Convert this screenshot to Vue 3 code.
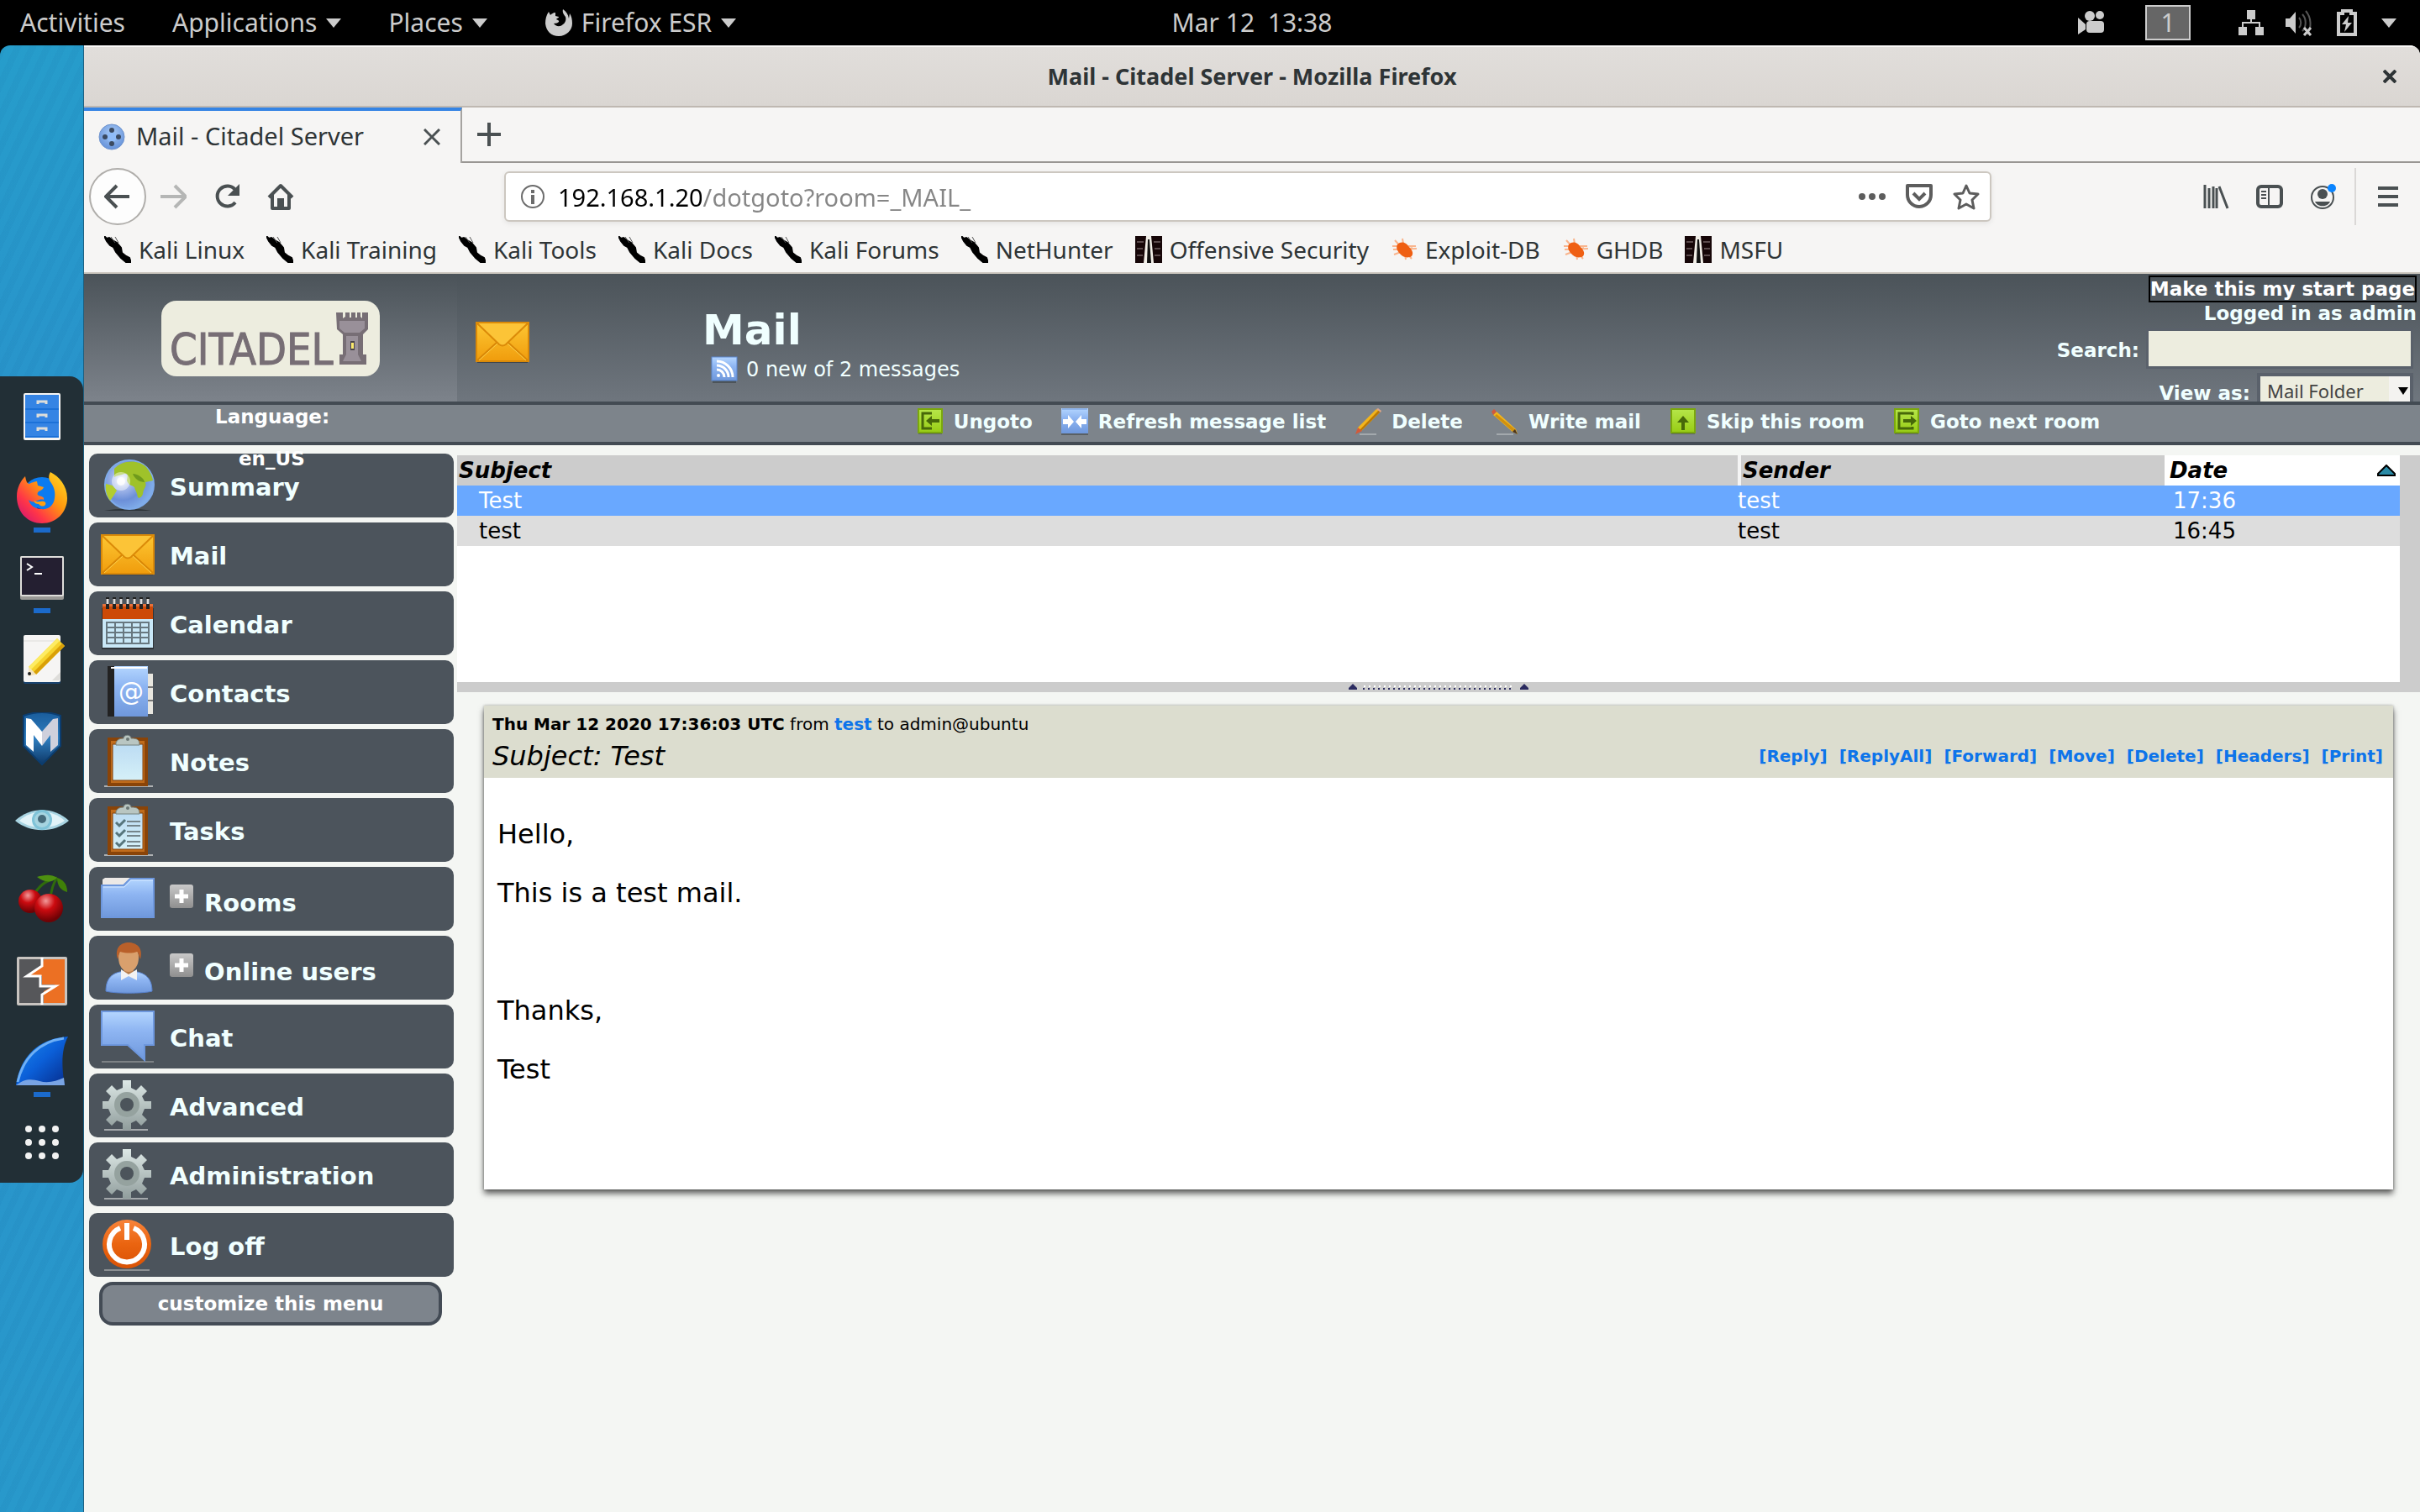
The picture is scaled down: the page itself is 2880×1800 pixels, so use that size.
<script setup>
import { ref } from 'vue'

const address = ref('192.168.1.20/dotgoto?room=_MAIL_')
const search = ref('')
const view = ref('Mail Folder')

const launchers = [
  { icon: 'files', name: 'Files' },
  { icon: 'firefox', name: 'Firefox', running: true },
  { icon: 'terminal', name: 'Terminal', running: true },
  { icon: 'notepad', name: 'Text editor' },
  { icon: 'metasploit', name: 'Metasploit' },
  { icon: 'eye', name: 'Zenmap' },
  { icon: 'cherry', name: 'CherryTree' },
  { icon: 'burp', name: 'Burp Suite' },
  { icon: 'shark', name: 'Wireshark', running: true },
  { icon: 'apps', name: 'Show applications' },
]

const bookmarks = [
  { icon: 'kali', label: 'Kali Linux' },
  { icon: 'kali', label: 'Kali Training' },
  { icon: 'kali', label: 'Kali Tools' },
  { icon: 'kali', label: 'Kali Docs' },
  { icon: 'kali', label: 'Kali Forums' },
  { icon: 'kali', label: 'NetHunter' },
  { icon: 'offsec', label: 'Offensive Security' },
  { icon: 'bug', label: 'Exploit-DB' },
  { icon: 'bug', label: 'GHDB' },
  { icon: 'offsec', label: 'MSFU' },
]

const tools = [
  { icon: 'ungoto', label: 'Ungoto' },
  { icon: 'refresh', label: 'Refresh message list' },
  { icon: 'pencil-up', label: 'Delete' },
  { icon: 'pencil-down', label: 'Write mail' },
  { icon: 'skip', label: 'Skip this room' },
  { icon: 'goto', label: 'Goto next room' },
]

const menu = [
  { icon: 'globe', label: 'Summary' },
  { icon: 'envelope', label: 'Mail' },
  { icon: 'calendar', label: 'Calendar' },
  { icon: 'contacts', label: 'Contacts', mark: '@' },
  { icon: 'notes', label: 'Notes' },
  { icon: 'tasks', label: 'Tasks' },
  { icon: 'folder', label: 'Rooms', expandable: true },
  { icon: 'user', label: 'Online users', expandable: true },
  { icon: 'chat', label: 'Chat' },
  { icon: 'gear', label: 'Advanced' },
  { icon: 'gear', label: 'Administration' },
  { icon: 'power', label: 'Log off', last: true },
]

const messages = [
  { subject: 'Test', sender: 'test', date: '17:36', selected: true },
  { subject: 'test', sender: 'test', date: '16:45' },
]

const actions = ['Reply', 'ReplyAll', 'Forward', 'Move', 'Delete', 'Headers', 'Print']
</script>

<template>
  <div class="screen">
    <svg class="sprite" aria-hidden="true">
      <defs>
        <linearGradient id="gGold" x1="0" y1="0" x2="0" y2="1"><stop offset="0" stop-color="#fdc733" /><stop offset="1" stop-color="#f09c0c" /></linearGradient>
        <linearGradient id="gBlue" x1="0" y1="0" x2="0" y2="1"><stop offset="0" stop-color="#b4d6ff" /><stop offset=".4" stop-color="#8eb5f2" /><stop offset="1" stop-color="#6f98dc" /></linearGradient>
        <linearGradient id="gGreen" x1="0" y1="0" x2="0" y2="1"><stop offset="0" stop-color="#b6e64a" /><stop offset="1" stop-color="#97cc14" /></linearGradient>
        <linearGradient id="gSteel" x1="0" y1="0" x2="0" y2="1"><stop offset="0" stop-color="#dde8e6" /><stop offset="1" stop-color="#909d9c" /></linearGradient>
        <linearGradient id="gSky" x1="0" y1="0" x2="0" y2="1"><stop offset="0" stop-color="#bcdcf3" /><stop offset="1" stop-color="#d5f0f8" /></linearGradient>
        <linearGradient id="gFin" x1="0" y1="0" x2="1" y2="1"><stop offset="0" stop-color="#1b8cf0" /><stop offset=".5" stop-color="#0b5fd8" /><stop offset="1" stop-color="#062a88" /></linearGradient>
        <linearGradient id="gFox" x1="1" y1="0" x2="0" y2="1"><stop offset="0" stop-color="#ffe226" /><stop offset=".4" stop-color="#ff980e" /><stop offset=".7" stop-color="#ff3647" /><stop offset="1" stop-color="#c80a80" /></linearGradient>
        <linearGradient id="gMsf" x1="0" y1="0" x2="0" y2="1"><stop offset="0" stop-color="#1a5d9c" /><stop offset=".5" stop-color="#2f7ec0" /><stop offset="1" stop-color="#0d3766" /></linearGradient>
        <linearGradient id="gPlus" x1="0" y1="0" x2="0" y2="1"><stop offset="0" stop-color="#c9c9c9" /><stop offset="1" stop-color="#8f8f8f" /></linearGradient>
        <linearGradient id="gPower" x1="0" y1="0" x2="0" y2="1"><stop offset="0" stop-color="#f8843a" /><stop offset=".5" stop-color="#ea6410" /><stop offset="1" stop-color="#d95205" /></linearGradient>
        <radialGradient id="gGlobe" cx=".35" cy=".4" r=".7"><stop offset="0" stop-color="#fff" /><stop offset=".25" stop-color="#a9bcec" /><stop offset=".6" stop-color="#6c8fd8" /><stop offset="1" stop-color="#85b4ee" /></radialGradient>
        <radialGradient id="gCherry" cx=".4" cy=".25" r=".7"><stop offset="0" stop-color="#f29a9a" /><stop offset=".45" stop-color="#cc0b10" /><stop offset="1" stop-color="#6f0205" /></radialGradient>
        <radialGradient id="gFav" cx=".5" cy=".35" r=".6"><stop offset="0" stop-color="#a9cbf5" /><stop offset="1" stop-color="#6a96dc" /></radialGradient>
      </defs>

      <symbol id="files" viewBox="0 0 64 64">
        <rect x="10" y="4" width="44" height="56" rx="2" fill="#f6f5f4" />
        <rect x="12" y="6" width="40" height="51" fill="#3584e4" />
        <path d="M12 23h40M12 39h40M12 56h40" stroke="#1c71d8" stroke-width="2" />
        <path d="M27 17v-3h10v3M27 33v-3h10v3M27 49v-3h10v3" fill="none" stroke="#deddda" stroke-width="3" />
      </symbol>
      <symbol id="firefox" viewBox="0 0 64 64">
        <circle cx="32" cy="32" r="24" fill="#0b7bf0" />
        <path d="M26 44c10 6 22 2 22-10 0 14-8 22-18 20z" fill="#2a1a90" />
        <path d="M42 2c-3 5-2 9 1 13 4 6 5 12 4 18-1 9-8 14-16 13-7 0-13-4-15-11 3 3 7 3 10 1 3-1 5-2 8-1 1-3-2-4-6-5-2-1-2-3 0-5 2-1 5-2 6-5-2-1-5-1-7-2l-1-5c-4 1-6 1-9 3-3 0-4-4-5-9-5 5-10 13-10 24 0 19 13 32 30 32s30-13 30-30C62 18 52 7 42 2z" fill="url(#gFox)" />
        <path d="M28 40c4 5 10 2 8-2-4-3-6 1-14-2 1 3 3 4 6 4z" fill="#ff9f10" />
      </symbol>
      <symbol id="terminal" viewBox="0 0 64 64">
        <rect x="6" y="6" width="52" height="52" rx="2" fill="#9a9996" />
        <rect x="6" y="6" width="52" height="48" rx="2" fill="#deddda" />
        <rect x="8" y="8" width="48" height="44" fill="#241f31" />
        <path d="M14 15l6 4-6 4M23 27h9" fill="none" stroke="#fff" stroke-width="2" />
      </symbol>
      <symbol id="notepad" viewBox="0 0 64 64">
        <rect x="10" y="6" width="44" height="56" rx="2" fill="#1a4470" />
        <rect x="10" y="4" width="44" height="56" rx="2" fill="#f6f5f4" />
        <path d="M10 11h44" stroke="#deddda" stroke-width="1" />
        <path d="M44 58l10-10v8a2 2 0 01-2 2z" fill="#deddda" />
        <path d="M16 42l34-34 9 9-34 34z" fill="#f6d32d" />
        <path d="M22 48l34-34 3 3-34 34z" fill="#d9a008" />
        <path d="M16 42l34-34 3 3-34 34z" fill="#fdec62" />
        <path d="M16 42l9 9-9 2z" fill="#f3e3c0" /><circle cx="17" cy="50" r="2" fill="#222" />
      </symbol>
      <symbol id="metasploit" viewBox="0 0 64 64">
        <path d="M10 4c14-5 30-5 44 0v36L32 62 10 40z" fill="url(#gMsf)" stroke="#0b3d70" stroke-width="2" />
        <path d="M13 7l6 1 13 15v17L22 27v20l-9-8z" fill="#fff" />
        <path d="M51 7l-6 1-13 15v17l10-13v20l9-8z" fill="#cfd0dc" />
      </symbol>
      <symbol id="eye" viewBox="0 0 64 64">
        <path d="M0 33C18 16 46 16 64 33 46 48 18 48 0 33z" fill="#a8d4e2" />
        <path d="M5 33C20 19 44 19 59 33 44 44 20 44 5 33z" fill="#e2f3f8" />
        <circle cx="32" cy="32" r="12" fill="#7fc3d8" /><circle cx="32" cy="32" r="9" fill="#a6d4e0" /><circle cx="32" cy="31" r="5" fill="#466a7a" />
      </symbol>
      <symbol id="cherry" viewBox="0 0 64 64">
        <path d="M23 24C32 10 40 8 50 5M42 30c1-12 3-18 8-25" fill="none" stroke="#2f6b0c" stroke-width="3" />
        <path d="M50 5C42 0 34 2 26 4c8 6 16 8 24 1z" fill="#4d9010" />
        <path d="M50 5c6 2 12 6 12 17-8-2-12-8-12-17z" fill="#3f8008" />
        <circle cx="18" cy="33" r="14" fill="url(#gCherry)" /><circle cx="40" cy="41" r="17" fill="url(#gCherry)" />
      </symbol>
      <symbol id="burp" viewBox="0 0 64 64">
        <rect x="2" y="3" width="60" height="58" rx="2" fill="#c8c4c0" />
        <rect x="5" y="6" width="54" height="52" fill="#56575a" />
        <path d="M34 6h25v52H34V44l14-8H32v-10H16L32 14z" fill="#ec7023" />
        <path d="M32 4v10L14 26h16v12h18L32 48v12" fill="none" stroke="#fff" stroke-width="3" />
      </symbol>
      <symbol id="shark" viewBox="0 0 64 64">
        <path d="M1 60C6 24 30 4 63 2c-8 14-8 36-4 58z" fill="url(#gFin)" />
        <path d="M3 56C10 26 30 8 58 4" fill="none" stroke="#6fb0f5" stroke-width="3" />
        <path d="M1 60c10-8 18-8 28-5s20 0 29-4l1 9z" fill="#79a4e4" />
      </symbol>
      <symbol id="apps" viewBox="0 0 64 64" fill="#f2f2f2">
        <g v-for="y in 3" :key="y"><circle v-for="x in 3" :key="x" :cx="x * 16" :cy="y * 16" r="4" /></g>
      </symbol>

      <symbol id="kali" viewBox="0 0 32 32">
        <path d="M0 0l3 3 3-1 4 3 5 3 5 6 1 6 5 4 4 2 2 6-6-1-6-5-6-7-3-6-4-2-4-5z" fill="#000" stroke="#000" stroke-width="2" />
        <path d="M8 1l5 7M13 1l4 7" stroke="#555" stroke-width="1" />
      </symbol>
      <symbol id="offsec" viewBox="0 0 32 32">
        <path d="M0 0h32v32H0z" fill="#160608" />
        <path d="M2 6h8v2H2zM2 14h7v2H2zM22 6h8v2h-8zM23 14h7v2h-7zM2 22h7v2H2zM23 22h7v2h-7z" fill="#5a4a4c" />
        <path d="M13 0h6l3 32H10z" fill="#f2efe8" />
        <path d="M15 4h2l2 28h-5z" fill="#111" />
      </symbol>
      <symbol id="bug" viewBox="0 0 32 32">
        <path d="M2 12h28M5 5l20 22M14 3l4 25M4 22l22-8M3 16l28-1" stroke="#f9b48c" stroke-width="2" />
        <path d="M8 10c4-4 10-3 13 2 4 4 7 8 4 12-5 3-11 1-14-3-3-3-5-7-3-11z" fill="#ef5f13" />
      </symbol>
      <symbol id="favicon" viewBox="0 0 32 32">
        <circle cx="16" cy="16" r="15" fill="url(#gFav)" stroke="#6f93cc" />
        <circle cx="16" cy="16" r="6" fill="#8fbcf8" />
        <g fill="#3b4a60"><circle cx="16" cy="8" r="3" /><circle cx="16" cy="24" r="3" /><circle cx="8" cy="16" r="3" /><circle cx="24" cy="16" r="3" /></g>
      </symbol>

      <symbol id="foxmark" viewBox="0 0 32 32">
        <path d="M21 0c-1 4 1 6 3 9 1 3 0 7-3 9-4 4-9 2-11-1 3 0 5-1 6-2 1-2-2-2-3-3 1-2 3-1 3-3l-4-1V4c-3 0-5 2-6 3L4 3C1 7 0 12 0 17c1 9 7 15 16 15s16-7 16-15C32 12 31 8 29 5l-1 6C27 6 25 3 21 0z" fill="#ccc" />
      </symbol>
      <symbol id="recorder" viewBox="0 0 32 32" fill="#ccc">
        <circle cx="14" cy="8" r="6" /><circle cx="26" cy="7" r="5" /><rect x="10" y="14" width="21" height="14" rx="4" /><path d="M0 10v20l9-6v-6z" />
      </symbol>
      <symbol id="network" viewBox="0 0 32 32" fill="#ccc">
        <path d="M11 1h10v11H11zM1 21h10v10H1zM21 21h10v10H21z" /><path d="M16 12v5M6 21v-5h20v5" fill="none" stroke="#ccc" stroke-width="2" />
      </symbol>
      <symbol id="sound" viewBox="0 0 32 32">
        <path d="M0 11h5l7-8v26l-7-8H0z" fill="#ccc" />
        <path d="M16 10c3 3 3 9 0 12M20 6c5 5 5 15 0 20M24 2c7 8 7 20 2 28" fill="none" stroke="#555" stroke-width="2" />
        <path d="M22 22l8 9M30 22l-8 9" stroke="#ccc" stroke-width="3" />
      </symbol>
      <symbol id="battery" viewBox="0 0 32 32">
        <path d="M6 5h5V2h10v3h5v25H6z" fill="none" stroke="#ccc" stroke-width="4" /><path d="M18 8l-8 10h5l-2 9 9-11h-5z" fill="#ccc" />
      </symbol>

      <symbol id="back" viewBox="0 0 32 32"><path d="M30 16H3M15 3L2 16l13 13" fill="none" stroke="#4a5052" stroke-width="4" /></symbol>
      <symbol id="forward" viewBox="0 0 32 32"><path d="M1 16h28M18 3l13 13-13 13" fill="none" stroke="#b5b6b5" stroke-width="4" /></symbol>
      <symbol id="reload" viewBox="0 0 32 32"><path d="M26 23a12 12 0 110-15" fill="none" stroke="#4a5052" stroke-width="4" /><path d="M31 1v14H17z" fill="#4a5052" /></symbol>
      <symbol id="home" viewBox="0 0 32 32"><path d="M2 17L16 3l14 14M6 14v16h20V14" fill="none" stroke="#4a5052" stroke-width="4" stroke-linejoin="round" /><path d="M12 18h8v12h-8z" fill="#4a5052" /></symbol>
      <symbol id="info" viewBox="0 0 32 32"><circle cx="16" cy="16" r="13" fill="none" stroke="#6c6c6c" stroke-width="2" /><path d="M14 8h4v4h-4zM14 14h4v11h-4z" fill="#6c6c6c" /></symbol>
      <symbol id="dots" viewBox="0 0 32 32" fill="#5d5d5d"><circle cx="4" cy="16" r="4" /><circle cx="16" cy="16" r="4" /><circle cx="28" cy="16" r="4" /></symbol>
      <symbol id="pocket" viewBox="0 0 32 32"><path d="M2 3h28v11a14 14 0 01-28 0z" fill="none" stroke="#5d5d5d" stroke-width="4" stroke-linejoin="round" /><path d="M9 12l7 7 7-7" fill="none" stroke="#5d5d5d" stroke-width="4" /></symbol>
      <symbol id="star" viewBox="0 0 32 32"><path d="M16 3l4 9 10 1-7 7 2 10-9-5-9 5 2-10-7-7 10-1z" fill="none" stroke="#5d5d5d" stroke-width="3" stroke-linejoin="round" /></symbol>
      <symbol id="library" viewBox="0 0 32 32"><path d="M3 2v28M8 6v24M13 4v26M17 6v24M20 4l10 26" stroke="#4a5052" stroke-width="3" fill="none" /></symbol>
      <symbol id="sidebar" viewBox="0 0 32 32"><rect x="2" y="4" width="28" height="24" rx="4" fill="none" stroke="#4a5052" stroke-width="4" /><path d="M15 4v24M6 10h6M6 14h6M6 18h6" stroke="#4a5052" stroke-width="2" /></symbol>
      <symbol id="account" viewBox="0 0 32 32"><circle cx="15" cy="17" r="13" fill="none" stroke="#4a5052" stroke-width="2" /><circle cx="15" cy="13" r="6" fill="#4a5052" /><path d="M6 22h18c-3 7-15 7-18 0z" fill="#4a5052" /><circle cx="26" cy="6" r="5" fill="#0a84ff" /></symbol>
      <symbol id="burger" viewBox="0 0 32 32"><path d="M4 6h24M4 16h24M4 26h24" stroke="#4a5052" stroke-width="4" /></symbol>

      <symbol id="ungoto" viewBox="0 0 32 32">
        <path d="M2 29h28v2H2z" fill="#5a6063" /><rect x="2" y="1" width="28" height="28" fill="url(#gGreen)" stroke="#7ba80c" stroke-width="2" />
        <path d="M18 6H7v18h11" fill="none" stroke="#476809" stroke-width="3" /><path d="M11 15l7-6v4h9v4h-9v4z" fill="#476809" />
      </symbol>
      <symbol id="goto" viewBox="0 0 32 32">
        <path d="M2 29h28v2H2z" fill="#5a6063" /><rect x="2" y="1" width="28" height="28" fill="url(#gGreen)" stroke="#7ba80c" stroke-width="2" />
        <path d="M23 8V6H7v18h16v-2" fill="none" stroke="#476809" stroke-width="3" /><path d="M28 15l-7-6v4h-9v4h9v4z" fill="#476809" />
      </symbol>
      <symbol id="skip" viewBox="0 0 32 32">
        <path d="M2 29h28v2H2z" fill="#5a6063" /><rect x="2" y="1" width="28" height="28" fill="url(#gGreen)" stroke="#7ba80c" stroke-width="2" />
        <path d="M16 9l7 8h-5v9h-4v-9H9z" fill="#476809" />
      </symbol>
      <symbol id="refresh" viewBox="0 0 32 32">
        <path d="M0 29h32v3H0z" fill="#5a6063" /><rect width="32" height="30" fill="url(#gBlue)" />
        <path d="M1 1h30" stroke="#6f98dc" stroke-width="1" />
        <path d="M2 13h6V8l7 8-7 8v-5H2zM30 13h-6V8l-7 8 7 8v-5h6z" fill="#fff" />
      </symbol>
      <symbol id="pencil-up" viewBox="0 0 32 32">
        <path d="M6 31h20" stroke="#a3a9ad" stroke-width="2" />
        <path d="M26 1l5 3L8 27l-6 3 2-7z" fill="#f3b51b" /><path d="M29 2l2 2L8 27l-2-1z" fill="#b97806" />
        <path d="M1 31l3-8 5 4z" fill="#d2593b" /><path d="M26 1l2-1 4 3-1 2z" fill="#dca58c" />
      </symbol>
      <symbol id="pencil-down" viewBox="0 0 32 32">
        <path d="M6 31h20" stroke="#a3a9ad" stroke-width="2" />
        <path d="M6 4L2 8l23 20 6 3-2-6z" fill="#f3b51b" /><path d="M4 9l2-2 23 19-2 3z" fill="#b97806" opacity=".6" />
        <path d="M6 4L2 8 0 4l3-3z" fill="#d2593b" /><path d="M31 31l-6-3 3-3z" fill="#4a3420" />
      </symbol>
      <symbol id="rss" viewBox="0 0 32 32">
        <path d="M2 29h28v3H2z" fill="#4d5459" /><rect x="1" y="1" width="30" height="28" fill="url(#gBlue)" stroke="#5d87cf" stroke-width="1" />
        <circle cx="9" cy="23" r="2" fill="#fff" /><path d="M7 16a9 9 0 019 9M7 11a14 14 0 0114 14M7 6a19 19 0 0119 19" fill="none" stroke="#fff" stroke-width="3" />
      </symbol>
      <symbol id="tower" viewBox="0 0 38 62">
        <path d="M0 0h8v7l3-2V0h5v6h2V0h5v6h2V0h4v5l2 2V0h7v20l-6 6v24h4v12H4V50h4V26l-7-6z" fill="#776e75" />
        <path d="M4 10h30v9l-6 5H10l-6-5zM12 28h14v22l4 8H8l4-8z" fill="#999099" />
        <path d="M17 34h5v11h-5z" fill="#4b464b" /><path d="M18 36h3v7h-3z" fill="#fbe96e" />
      </symbol>

      <symbol id="envelope" viewBox="0 0 64 64">
        <path d="M2 54h60v3H2z" fill="#3f454b" />
        <rect x="1" y="9" width="62" height="46" fill="url(#gGold)" stroke="#db8a08" stroke-width="2" />
        <path d="M3 11h58" stroke="#ffe084" stroke-width="2" />
        <path d="M2 54l24-22M62 54L38 32" stroke="#d98706" stroke-width="2" fill="none" />
        <path d="M4 54l22-20M60 54L38 34" stroke="#fcd24e" stroke-width="1" fill="none" />
        <path d="M2 10l26 25q4 3 8 0l26-25" fill="#fcc437" stroke="#db8a08" stroke-width="2" />
      </symbol>
      <symbol id="globe" viewBox="0 0 64 64">
        <path d="M4 62c16-3 40-3 56 0z" fill="#2d3337" />
        <circle cx="34" cy="31" r="29" fill="url(#gGlobe)" stroke="#7eabea" stroke-width="2" />
        <path d="M16 12c8-10 28-12 38-2 4 5 7 10 8 16l-9 2c2 6-2 6-3 14-1 4-5 6-6 4-1-6-3-8-4-12-4-3-7-2-9-8 1-6 2-8-3-8-5 2-9 2-12 4z" fill="#9fc22a" />
        <path d="M6 30l8 2 5 6-5 8-3 4C7 44 5 38 6 30z" fill="#b3cd2f" />
        <path d="M38 18c6 0 14 6 14 10-6 0-12-4-14-10z" fill="#6f9a1c" />
        <circle cx="24" cy="27" r="11" fill="#fff" opacity=".45" /><circle cx="24" cy="27" r="5" fill="#fff" opacity=".8" />
      </symbol>
      <symbol id="calendar" viewBox="0 0 64 64">
        <path d="M1 14h62v49H1z" fill="#2f3439" /><path d="M2 9h60v52H2z" fill="#c9e8f7" />
        <path d="M2 9h60v18H2z" fill="#cd4a07" /><path d="M2 9h60v3H2z" fill="#e8713a" />
        <path d="M8 1v14M16 1v14M24 1v14M32 1v14M40 1v14M48 1v14M56 1v14" stroke="#222" stroke-width="4" />
        <path d="M8 3v6M16 3v6M24 3v6M32 3v6M40 3v6M48 3v6M56 3v6" stroke="#ddd" stroke-width="3" />
        <path d="M7 31h50v25H7zM7 37h50M7 43h50M7 49h50M17 31v25M27 31v25M37 31v25M47 31v25" fill="none" stroke="#687880" stroke-width="2" />
      </symbol>
      <symbol id="contacts" viewBox="0 0 64 64">
        <path d="M56 10h6v48h-6z" fill="#e8e6df" /><path d="M56 26h6M56 42h6" stroke="#777" stroke-width="2" />
        <path d="M8 1h48v60H8z" fill="url(#gBlue)" /><path d="M8 1h8v60H8z" fill="#222" /><path d="M12 3h43" stroke="#fff" stroke-width="2" />
      </symbol>
      <symbol id="notes" viewBox="0 0 64 64">
        <path d="M4 62h58" stroke="#aeb1b3" stroke-width="2" />
        <rect x="10" y="6" width="44" height="54" fill="#c06c1c" stroke="#8a4408" stroke-width="4" />
        <path d="M14 12h36v43H14z" fill="url(#gSky)" stroke="#83400a" stroke-width="1" />
        <path d="M18 10q2-5 9-5c0-5 9-5 9 0 8 0 10 2 10 8H18z" fill="#b9c6c2" stroke="#75827f" /><circle cx="32" cy="6" r="2" fill="#6a7674" />
      </symbol>
      <symbol id="tasks" viewBox="0 0 64 64">
        <use href="#notes" width="64" height="64" />
        <path d="M18 23l4 4 7-7M18 35l4 4 7-7M18 47l4 4 7-7" fill="none" stroke="#56757c" stroke-width="3" />
        <path d="M31 22h16M31 27h16M31 34h16M31 39h16M31 46h16M31 51h16" stroke="#75848a" stroke-width="2" />
      </symbol>
      <symbol id="folder" viewBox="0 0 64 64">
        <path d="M2 9l3-2h30v10H2z" fill="#ece9e6" /><path d="M1 16h26l8-8h28v46H1z" fill="url(#gBlue)" stroke="#6d97dd" stroke-width="2" />
        <path d="M3 18h25l8-8h26" fill="none" stroke="#d3e7ff" />
      </symbol>
      <symbol id="user" viewBox="0 0 64 64">
        <path d="M6 60c0-18 10-24 27-24s28 6 28 24c-10 3-45 3-55 0z" fill="url(#gBlue)" stroke="#5781cd" stroke-width="1" />
        <path d="M27 32h12v8H27z" fill="#b87c4a" />
        <ellipse cx="33" cy="20" rx="12" ry="17" fill="#d9a06d" />
        <path d="M20 22C16 8 24 2 33 2s18 6 14 20c-2-4-2-8-4-9-6 2-12 2-20 0-2 3-2 6-3 9z" fill="#b9602a" />
        <path d="M24 34l9 6 10-6v13l-10-5-9 5z" fill="#f3f3f3" />
      </symbol>
      <symbol id="chat" viewBox="0 0 64 64">
        <path d="M1 62h62" stroke="#7c8185" stroke-width="2" />
        <path d="M1 2h62v40H52v18L32 42H1z" fill="url(#gBlue)" stroke="#6d97dd" stroke-width="2" />
      </symbol>
      <symbol id="gear" viewBox="0 0 64 64">
        <path d="M4 61h52" stroke="#a4a8ab" stroke-width="2" />
        <path d="M26 2h10v9l6 3 6-6 7 7-6 6 3 6h8v9h-8l-3 7 6 6-7 7-6-6-6 3v8H26v-8l-7-3-6 6-7-7 6-6-3-7H2v-9h7l3-6-6-6 7-7 6 6 7-3z" fill="url(#gSteel)" />
        <circle cx="31" cy="31" r="15" fill="#95a29f" /><circle cx="31" cy="31" r="8" fill="#4c545b" />
      </symbol>
      <symbol id="power" viewBox="0 0 64 64">
        <path d="M4 62h54" stroke="#8b8f92" stroke-width="2" />
        <circle cx="31" cy="31" r="29" fill="url(#gPower)" />
        <path d="M23 12a21 21 0 1016 0" fill="none" stroke="#fff" stroke-width="6" /><path d="M31 6v20" stroke="#fff" stroke-width="6" />
      </symbol>
      <symbol id="plus" viewBox="0 0 28 28">
        <rect width="28" height="28" rx="3" fill="url(#gPlus)" /><path d="M14 6v16M6 14h16" stroke="#fff" stroke-width="5" />
      </symbol>
    </svg>

    <header class="topbar">
      <nav class="topbar-left">
        <button class="top-item">Activities</button>
        <button class="top-item">Applications<i class="caret"></i></button>
        <button class="top-item">Places<i class="caret"></i></button>
        <button class="top-item fox"><svg class="glyph"><use href="#foxmark" /></svg>Firefox ESR<i class="caret"></i></button>
      </nav>
      <time class="clock">Mar 12&nbsp; 13:38</time>
      <div class="tray">
        <svg class="glyph"><use href="#recorder" /></svg>
        <span class="workspace">1</span>
        <div class="status">
          <svg class="glyph"><use href="#network" /></svg>
          <svg class="glyph"><use href="#sound" /></svg>
          <svg class="glyph"><use href="#battery" /></svg>
          <i class="caret"></i>
        </div>
      </div>
    </header>

    <div class="desktop">
      <aside class="wallpaper">
        <nav class="dock">
          <button v-for="app in launchers" :key="app.name" class="launcher" :aria-label="app.name">
            <svg class="launcher-icon"><use :href="'#' + app.icon" /></svg>
            <i v-if="app.running" class="running"></i>
          </button>
        </nav>
      </aside>

      <section class="window">
        <div class="titlebar">
          <h1>Mail - Citadel Server - Mozilla Firefox</h1>
          <button class="window-close" aria-label="Close window">
            <svg viewBox="0 0 16 16"><path d="M1 1l14 14M15 1L1 15" stroke="#2e3436" stroke-width="4" /></svg>
          </button>
        </div>

        <div class="tabs">
          <div class="tab">
            <svg class="glyph"><use href="#favicon" /></svg>
            <span class="tab-title">Mail - Citadel Server</span>
            <button class="tab-close" aria-label="Close tab">
              <svg viewBox="0 0 20 20"><path d="M1 1l18 18M19 1L1 19" stroke="#4a5052" stroke-width="3" /></svg>
            </button>
          </div>
          <div class="tab-rest">
            <button class="tab-new" aria-label="New tab">
              <svg viewBox="0 0 28 28"><path d="M14 0v28M0 14h28" stroke="#4a5052" stroke-width="4" /></svg>
            </button>
          </div>
        </div>

        <div class="navbar">
          <div class="nav-left">
            <button class="back" aria-label="Back"><svg class="glyph"><use href="#back" /></svg></button>
            <button class="nav-btn" aria-label="Forward"><svg class="glyph"><use href="#forward" /></svg></button>
            <button class="nav-btn" aria-label="Reload"><svg class="glyph"><use href="#reload" /></svg></button>
            <button class="nav-btn" aria-label="Home"><svg class="glyph"><use href="#home" /></svg></button>
          </div>
          <div class="address">
            <svg class="glyph"><use href="#info" /></svg>
            <input v-model="address" class="url" type="text" aria-label="Address" />
            <div class="address-actions">
              <button aria-label="Page actions"><svg class="glyph"><use href="#dots" /></svg></button>
              <button aria-label="Save to Pocket"><svg class="glyph"><use href="#pocket" /></svg></button>
              <button aria-label="Bookmark"><svg class="glyph"><use href="#star" /></svg></button>
            </div>
          </div>
          <div class="nav-right">
            <button aria-label="Library"><svg class="glyph"><use href="#library" /></svg></button>
            <button aria-label="Sidebar"><svg class="glyph"><use href="#sidebar" /></svg></button>
            <button aria-label="Account"><svg class="glyph"><use href="#account" /></svg></button>
            <button class="burger" aria-label="Menu"><svg class="glyph"><use href="#burger" /></svg></button>
          </div>
        </div>

        <nav class="bookmarks">
          <a v-for="b in bookmarks" :key="b.label" href="#"><svg class="glyph"><use :href="'#' + b.icon" /></svg>{{ b.label }}</a>
        </nav>

        <div class="citadel">
          <div class="banner">
            <div class="brand">
              <a class="logo" href="#"><span>CITADEL</span><svg class="tower"><use href="#tower" /></svg></a>
            </div>
            <div class="room">
              <svg class="room-icon"><use href="#envelope" /></svg>
              <div class="room-text">
                <h2>Mail</h2>
                <p><svg class="glyph"><use href="#rss" /></svg>0 new of 2 messages</p>
              </div>
              <div class="session">
                <a class="start" href="#">Make this my start page</a>
                <span class="login">Logged in as admin</span>
                <div class="field">
                  <label for="search">Search:</label>
                  <input id="search" v-model="search" type="text" />
                </div>
                <div class="field">
                  <label for="view">View as:</label>
                  <div class="select">
                    <select id="view" v-model="view"><option>Mail Folder</option></select>
                    <i class="select-arrow"></i>
                  </div>
                </div>
              </div>
            </div>
          </div>

          <div class="toolbar">
            <div class="language">Language:<span class="locale">en_US</span></div>
            <div class="tools">
              <a v-for="t in tools" :key="t.label" href="#"><svg class="glyph"><use :href="'#' + t.icon" /></svg>{{ t.label }}</a>
            </div>
          </div>

          <div class="content">
            <nav class="menu">
              <a v-for="m in menu" :key="m.label" href="#" class="menu-item" :class="{ expandable: m.expandable, last: m.last }">
                <span class="menu-icon">
                  <svg><use :href="'#' + m.icon" /></svg>
                  <i v-if="m.mark" class="mark">{{ m.mark }}</i>
                </span>
                <svg v-if="m.expandable" class="expander"><use href="#plus" /></svg>
                <span class="menu-label">{{ m.label }}</span>
              </a>
              <a class="customize" href="#">customize this menu</a>
            </nav>

            <main class="mail">
              <div class="list">
                <table>
                  <colgroup><col /><col class="col-sender" /><col class="col-date" /></colgroup>
                  <thead>
                    <tr>
                      <th>Subject</th>
                      <th class="th-sender">Sender</th>
                      <th class="th-date">
                        <div>Date
                          <svg class="sort" viewBox="0 0 24 14"><path d="M12 1L2 11v2h20v-2z" fill="#2a8aa6" stroke="#000" stroke-width="2" /></svg>
                        </div>
                      </th>
                    </tr>
                  </thead>
                  <tbody>
                    <tr v-for="row in messages" :key="row.date" :class="{ selected: row.selected }">
                      <td class="td-subject">{{ row.subject }}</td>
                      <td>{{ row.sender }}</td>
                      <td class="td-date">{{ row.date }}</td>
                    </tr>
                  </tbody>
                </table>
                <div class="track"></div>
              </div>
              <div class="splitter">
                <svg viewBox="0 0 216 8">
                  <path d="M1 7h10v-2L6 0 1 5zM205 7h10v-2l-5-5-5 5z" fill="#2b2b60" />
                  <path d="M19 3h179" stroke="#fff" stroke-width="2" stroke-dasharray="2 4" />
                  <path d="M18 6h180" stroke="#2b2b60" stroke-width="2" stroke-dasharray="2 4" />
                </svg>
              </div>

              <article class="message">
                <div class="message-head">
                  <p class="meta"><b>Thu Mar 12 2020 17:36:03 UTC</b> from <a href="#">test</a> to admin@ubuntu</p>
                  <div class="message-row">
                    <p class="subject">Subject: Test</p>
                    <div class="actions"><a v-for="a in actions" :key="a" href="#">[{{ a }}]</a></div>
                  </div>
                </div>
                <div class="message-body">
                  <p>Hello,</p>
                  <p>This is a test mail.</p>
                  <p>&nbsp;</p>
                  <p>Thanks,</p>
                  <p>Test</p>
                </div>
              </article>
            </main>
          </div>
        </div>
      </section>
    </div>
  </div>
</template>

<style>
body {
  background: #000;
}
</style>

<style scoped>
* {
  box-sizing: border-box;
}
.screen {
  display: flex;
  flex-direction: column;
  min-height: 100vh;
  font-family: "Noto Sans", sans-serif;
  font-size: 29px;
  color: #2e3436;
}
.sprite {
  position: absolute;
  width: 0;
  height: 0;
}
button {
  display: flex;
  align-items: center;
  margin: 0;
  padding: 0;
  border: 0;
  background: none;
  font: inherit;
  color: inherit;
}
a {
  color: inherit;
  text-decoration: none;
}
h1,
h2,
p {
  margin: 0;
}
.glyph {
  flex: none;
  width: 32px;
  height: 32px;
}

/* Desktop panel */
.topbar {
  display: flex;
  align-items: center;
  height: 54px;
  font-size: 30px;
  line-height: 40px;
  color: #ccc;
}
.topbar-left {
  display: flex;
  flex: 1 1 0;
  gap: 56px;
  padding-right: 104px;
  padding-left: 24px;
}
.top-item {
  gap: 11px;
  white-space: nowrap;
}
.fox {
  margin-left: 13px;
}
.caret {
  border: 9px solid transparent;
  border-top: 11px solid #ccc;
  border-bottom: 0;
}
.tray {
  display: flex;
  flex: 1 1 0;
  align-items: center;
  justify-content: flex-end;
  gap: 48px;
  padding-right: 28px;
}
.workspace {
  width: 54px;
  height: 42px;
  border: 2px solid #ccc;
  background: #666;
  line-height: 38px;
  text-align: center;
}
.status {
  display: flex;
  align-items: center;
  gap: 25px;
  padding-left: 8px;
}

/* Desktop and dock */
.desktop {
  display: flex;
  flex: 1;
}
.wallpaper {
  flex: none;
  width: 100px;
  padding-top: 394px;
  border-right: 1px solid #1c5f80;
  border-top-left-radius: 12px;
  background:
    repeating-linear-gradient(115deg, rgba(0, 60, 120, 0.04) 0 8px, transparent 8px 16px),
    linear-gradient(160deg, #269dcb, #2a90cb 35%, #2899cb);
}
.dock {
  border-radius: 0 16px 16px 0;
  background: #222f36;
}
.launcher {
  position: relative;
  justify-content: center;
  width: 100%;
  height: 96px;
}
.launcher-icon {
  width: 64px;
  height: 64px;
}
.running {
  position: absolute;
  bottom: 6px;
  left: 40px;
  width: 20px;
  height: 6px;
  background: #1b6acb;
}

/* Browser window */
.window {
  display: flex;
  flex: 1;
  flex-direction: column;
  min-width: 0;
  overflow: hidden;
  border-top-right-radius: 12px;
  background: #f6f5f4;
}
.titlebar {
  display: flex;
  align-items: center;
  justify-content: center;
  position: relative;
  height: 74px;
  border-top: 2px solid #f9f8f7;
  border-bottom: 2px solid #bfb8b1;
  background: linear-gradient(#e1dedb, #dad6d2);
}
h1 {
  font-size: 27px;
  font-weight: 700;
  line-height: 40px;
}
.window-close {
  position: absolute;
  right: 28px;
}
.window-close svg {
  width: 16px;
  height: 16px;
}
.tabs {
  display: flex;
  height: 66px;
}
.tab {
  display: flex;
  align-items: center;
  width: 450px;
  padding: 0 24px 0 17px;
  border-top: 4px solid #3584e4;
  border-right: 2px solid #a5a3a0;
}
.tab-title {
  flex: 1;
  padding: 0 0 4px 13px;
}
.tab-close svg {
  width: 20px;
  height: 20px;
}
.tab-rest {
  display: flex;
  flex: 1;
  padding-left: 18px;
  border-bottom: 2px solid #999693;
}
.tab-new svg {
  width: 28px;
  height: 28px;
}
.navbar {
  display: flex;
  align-items: center;
  height: 80px;
}
.nav-left {
  display: flex;
  align-items: center;
  gap: 32px;
  width: 500px;
  padding-left: 6px;
}
.back {
  justify-content: center;
  width: 68px;
  height: 68px;
  border: 2px solid #b0aeab;
  border-radius: 50%;
  background: #fdfdfd;
}
.back + .nav-btn {
  margin-left: -16px;
}
.address {
  display: flex;
  flex: 1;
  align-items: center;
  height: 60px;
  padding: 0 12px 0 16px;
  border: 2px solid #ccc7c0;
  border-radius: 6px;
  background: #fff;
  box-shadow: 0 2px 6px rgba(0, 0, 0, 0.08);
}
.url {
  flex: 1;
  margin-left: 14px;
  padding: 0;
  border: 0;
  outline: 0;
  background: linear-gradient(90deg, #000 171px, #868686 171px);
  background-clip: text;
  font: inherit;
  color: transparent;
}
.address-actions {
  display: flex;
  gap: 24px;
}
.nav-right {
  display: flex;
  align-items: center;
  justify-content: flex-end;
  gap: 32px;
  width: 510px;
  padding-right: 22px;
}
.burger {
  height: 68px;
  margin-left: -11px;
  padding-left: 22px;
  border-left: 2px solid #dad8d6;
}
.bookmarks {
  display: flex;
  align-items: center;
  gap: 26px;
  height: 52px;
  padding: 0 24px 4px;
  border-bottom: 2px solid #ccc7bf;
  font-size: 28px;
  line-height: 40px;
}
.bookmarks a {
  display: flex;
  align-items: center;
  gap: 9px;
  white-space: nowrap;
}

/* Citadel page */
.citadel {
  display: flex;
  flex: 1;
  flex-direction: column;
  background: #f4f6f3;
  font-family: "DejaVu Sans", sans-serif;
  font-size: 23px;
  color: #000;
}
.banner {
  display: flex;
  height: 156px;
  border-bottom: 4px solid #434b53;
}
.brand {
  flex: none;
  width: 444px;
  padding: 32px 92px;
  background: linear-gradient(#4b5359, #7d838b);
}
.logo {
  display: flex;
  align-items: flex-end;
  height: 90px;
  padding: 0 14px 14px 10px;
  border-radius: 18px;
  background: #ededdf;
  font-family: "DejaVu Sans Condensed", "DejaVu Sans", sans-serif;
  font-size: 52px;
  font-stretch: condensed;
  line-height: 36px;
  color: #776e75;
  -webkit-text-stroke: 1px #776e75;
}
.logo span {
  flex: 1;
}
.tower {
  width: 38px;
  height: 62px;
}
.room {
  display: flex;
  flex: 1;
  overflow: hidden;
  padding-left: 22px;
  background: linear-gradient(#4b5359, #6f767e);
  color: #f0ffff;
}
.room-icon {
  width: 64px;
  height: 64px;
  margin-top: 49px;
}
.room-text {
  flex: 1;
  padding: 36px 0 0 206px;
}
h2 {
  font-size: 50px;
  line-height: 62px;
}
.room-text p {
  display: flex;
  align-items: center;
  gap: 10px;
  padding-left: 10px;
  font-size: 24px;
  line-height: 32px;
}
.session {
  display: flex;
  flex-direction: column;
  align-items: flex-end;
  padding: 2px 4px 0 0;
  font-weight: 700;
}
.start {
  height: 32px;
  border: 2px solid #000;
  line-height: 28px;
  color: #fff;
}
.login {
  line-height: 26px;
}
.field {
  display: flex;
  align-items: center;
  gap: 8px;
  margin: 5px 4px 0 0;
}
.field label {
  padding-top: 4px;
  line-height: 16px;
}
#search {
  width: 318px;
  height: 48px;
  border: 3px solid #5a616b;
  background: #ededdf;
}
.select {
  display: flex;
  position: relative;
}
#view {
  width: 186px;
  height: 44px;
  padding: 0 8px 3px;
  border: 4px solid #5a616b;
  border-radius: 0;
  appearance: none;
  background: linear-gradient(90deg, #ededdf 86%, #f4f3f0 86%);
  font-family: "Noto Sans", sans-serif;
  font-size: 22px;
  color: #444;
}
.select-arrow {
  position: absolute;
  top: 17px;
  right: 6px;
  border: 6px solid transparent;
  border-top: 9px solid #000;
  border-bottom: 0;
}
.toolbar {
  display: flex;
  height: 48px;
  border-bottom: 4px solid #434b53;
  background: #7d848b;
  font-weight: 700;
  color: #f0ffff;
}
.language {
  position: relative;
  width: 444px;
  padding-left: 156px;
  line-height: 28px;
  color: #fff;
}
.locale {
  position: absolute;
  top: 50px;
  left: 184px;
}
.tools {
  display: flex;
  flex: 1;
  justify-content: center;
  gap: 34px;
  padding-left: 166px;
  line-height: 40px;
}
.tools a {
  display: flex;
  align-items: center;
  gap: 12px;
  height: 40px;
}
.content {
  display: flex;
  align-items: flex-start;
}

/* Side menu */
.menu {
  flex: none;
  width: 444px;
  padding: 10px 4px 10px 6px;
}
.menu-item {
  display: flex;
  align-items: center;
  gap: 13px;
  height: 76px;
  margin-bottom: 6px;
  padding-left: 14px;
  border-radius: 10px;
  background: #4c545c;
  font-size: 29px;
  font-weight: 700;
  color: #f0ffff;
}
.menu-icon {
  position: relative;
  width: 64px;
  height: 64px;
  margin-right: 5px;
}
.menu-icon svg {
  width: 64px;
  height: 64px;
}
.mark {
  position: absolute;
  inset: 0 0 0 8px;
  font-size: 30px;
  font-style: normal;
  font-weight: 400;
  line-height: 64px;
  text-align: center;
  color: #fff;
}
.menu-label {
  padding-top: 3px;
}
.expander {
  width: 28px;
  height: 28px;
  margin-bottom: 6px;
}
.expandable .menu-label {
  padding-top: 10px;
}
.last {
  margin-top: 8px;
}
.customize {
  display: block;
  height: 52px;
  margin: 0 14px 0 12px;
  border: 4px solid #434b55;
  border-radius: 16px;
  background: #7d848c;
  font-weight: 700;
  line-height: 44px;
  text-align: center;
  color: #fff;
}

/* Message list */
.mail {
  flex: 1;
  min-width: 0;
  padding-top: 12px;
}
.list {
  display: flex;
  align-items: flex-start;
  min-height: 270px;
  background: #fff;
}
table {
  flex: 1;
  border-spacing: 0;
  table-layout: fixed;
  font-size: 26px;
  line-height: 36px;
}
.col-sender {
  width: 508px;
}
.col-date {
  width: 280px;
}
th {
  height: 36px;
  padding: 0 2px;
  background: #ccc;
  font-style: italic;
  text-align: left;
}
.th-sender {
  border-left: 4px solid #f4f4f4;
}
.th-date {
  padding: 0 4px 0 6px;
  background: #fff;
}
.th-date div {
  display: flex;
  align-items: center;
  justify-content: space-between;
}
.sort {
  width: 24px;
  height: 14px;
}
td {
  height: 36px;
  padding: 0;
  background: #ddd;
}
.selected td {
  background: #69a8ff;
  color: #fff;
}
.td-subject {
  padding-left: 26px;
}
.td-date {
  padding-left: 10px;
}
.track {
  align-self: stretch;
  width: 24px;
  background: #ccc;
}
.splitter {
  display: flex;
  justify-content: center;
  height: 12px;
  padding-top: 2px;
  background: #ccc;
}
.splitter svg {
  width: 216px;
  height: 8px;
}

/* Open message */
.message {
  margin: 16px 32px 0;
  background: #fff;
  box-shadow: 0 5px 7px rgba(0, 0, 0, 0.6), 0 0 3px rgba(0, 0, 0, 0.3);
}
.message-head {
  height: 86px;
  padding: 8px 12px 0 10px;
  background: #dcddcf;
  font-size: 20px;
}
.meta {
  line-height: 28px;
}
.message-row {
  display: flex;
  align-items: center;
  justify-content: space-between;
}
.subject {
  font-size: 32px;
  font-style: italic;
  line-height: 48px;
}
.actions {
  display: flex;
  gap: 14px;
}
.meta a,
.actions a {
  font-weight: 700;
  color: #0d74ea;
}
.message-body {
  padding: 48px 16px 124px;
  font-size: 32px;
  line-height: 38px;
}
.message-body p + p {
  margin-top: 32px;
}
</style>
